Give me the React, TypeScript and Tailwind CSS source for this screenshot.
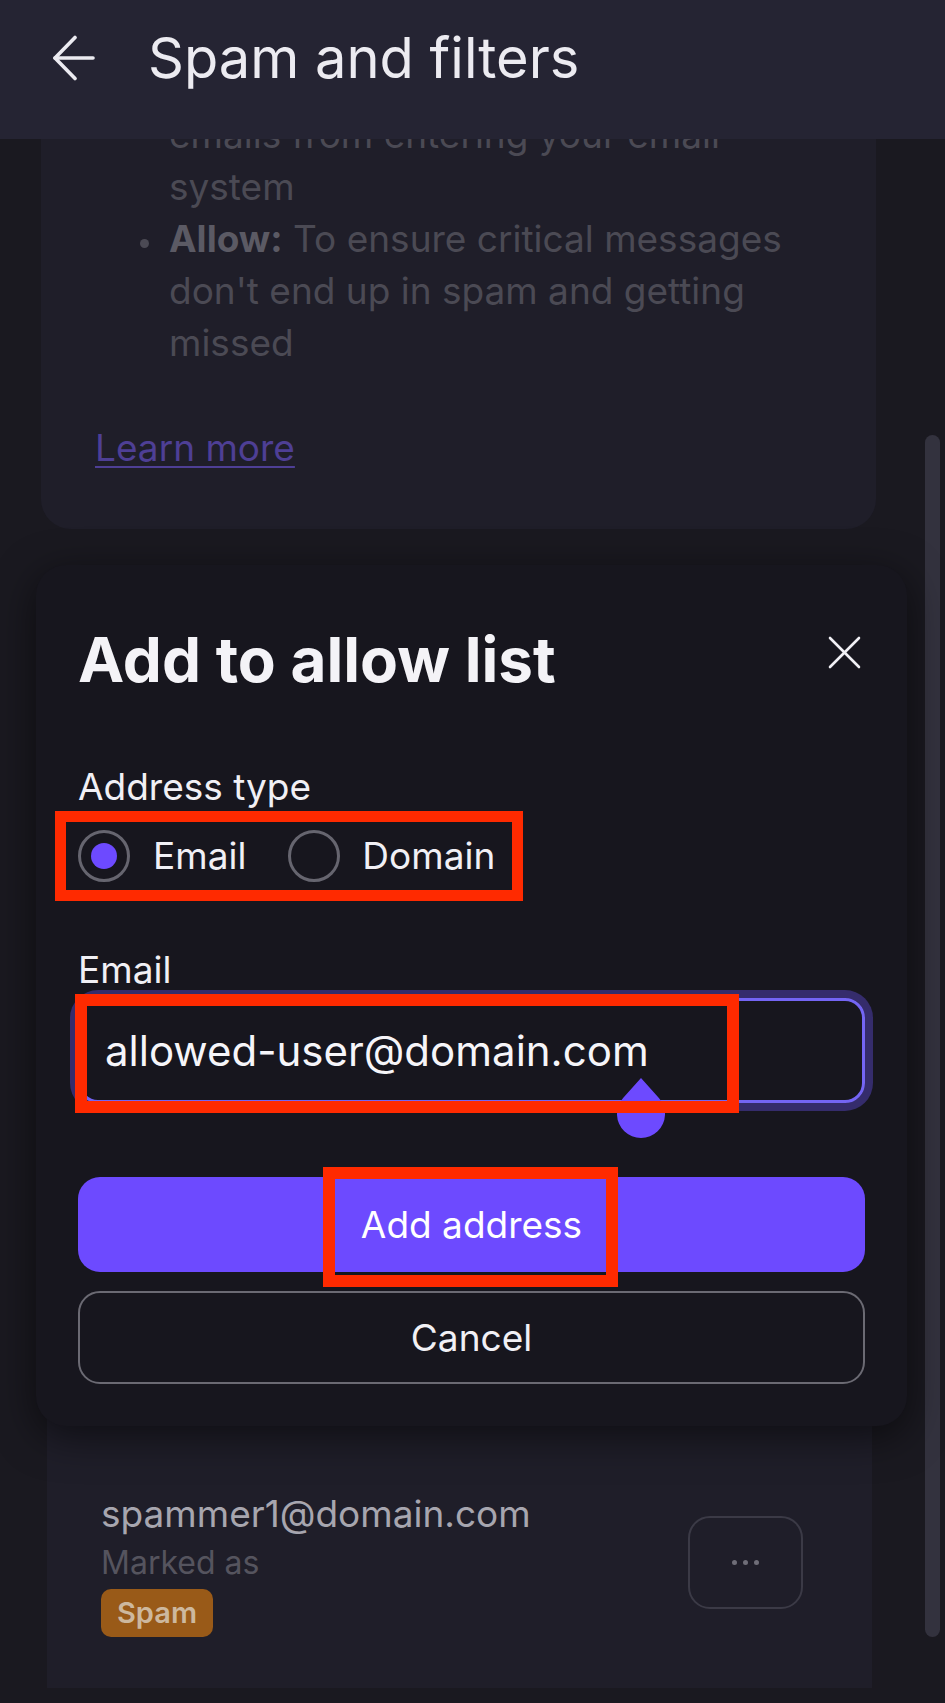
import React from "react";

function BackArrow() {
  return (
    <svg width="43" height="46" viewBox="0 0 43 46" fill="none" stroke="#ecebf1" strokeWidth="3.6" strokeLinecap="round" strokeLinejoin="round">
      <path d="M41 23H3" />
      <path d="M23 2.5L3 23l20 20.5" />
    </svg>
  );
}

function CloseIcon() {
  return (
    <svg width="33" height="33" viewBox="0 0 33 33" fill="none" stroke="#f1f0f5" strokeWidth="2.6" strokeLinecap="round">
      <path d="M2 2l29 29" />
      <path d="M31 2L2 31" />
    </svg>
  );
}

function Drop() {
  return (
    <svg width="48" height="60" viewBox="0 0 48 60">
      <path d="M24 0L41.9 20A24 24 0 1 1 6.1 20Z" fill="#6d4aff" />
    </svg>
  );
}

export default function App() {
  return (
    <div className="relative w-[945px] h-[1703px] overflow-hidden bg-[#1a1920] font-['Inter',sans-serif]">
      {/* Top bar */}
      <header className="relative z-10 h-[139px] bg-[#252433] pl-[52px] pt-[24px]">
        <div className="flex h-[68px] items-center gap-[53px]">
          <BackArrow />
          <h1 className="text-[56px] leading-[68px] text-[#ecebf1]">Spam and filters</h1>
        </div>
      </header>

      <main className="h-[1564px] overflow-hidden">
        {/* Info card (partially scrolled under header) */}
        <section className="-mt-[84px] ml-[41px] w-[835px] rounded-[30px] bg-[#1f1e29] pl-[54px] pt-[54px] pb-[55px] text-[37px] leading-[52px] text-[#4b4a54]">
          <div className="pl-[74px] whitespace-nowrap">
            emails from entering your email
            <br />
            system
          </div>
          <ul className="flex flex-col">
            <li className="flex items-start">
              <span className="flex w-[74px] shrink-0 justify-end pr-[20px] pt-[26px]">
                <span className="size-[9px] rounded-full bg-[#4b4a54]" />
              </span>
              <span className="whitespace-nowrap">
                <b className="font-bold text-[#5b5a64]">Allow:</b> To ensure critical messages
                <br />
                don't end up in spam and getting
                <br />
                missed
              </span>
            </li>
          </ul>
          <a className="mt-[53px] block w-fit text-[#4e3f95] underline decoration-[2px] underline-offset-[5px]">Learn more</a>
        </section>

        {/* Address list row (mostly hidden under the dialog) */}
        <section className="mt-[873px] ml-[47px] w-[825px] bg-[#1f1e29] pl-[54px] pr-[69px] pt-[86px] pb-[51px]">
          <div className="flex items-center justify-between">
            <div className="flex flex-col items-start">
              <span className="text-[37px] leading-[52px] text-[#a7a6af]">spammer1@domain.com</span>
              <span className="mt-[1px] text-[32px] leading-[44px] text-[#55545e]">Marked as</span>
              <span className="mt-[4px] h-[48px] rounded-[10px] bg-[#995a18] px-[16px] text-[29px] font-semibold leading-[48px] text-[#cdb89e]">Spam</span>
            </div>
            <button className="flex h-[93px] w-[115px] items-center justify-center gap-[6px] rounded-[22px] border-2 border-[#3b3a46]">
              <span className="size-[5px] rounded-full bg-[#6f6e78]" />
              <span className="size-[5px] rounded-full bg-[#6f6e78]" />
              <span className="size-[5px] rounded-full bg-[#6f6e78]" />
            </button>
          </div>
        </section>
      </main>

      {/* Scrollbar */}
      <div className="absolute left-[925px] top-[435px] h-[1202px] w-[15px] rounded-full bg-[#33323e]" />

      {/* Dialog */}
      <div className="absolute left-[36px] top-[565px] z-20 w-[871px] rounded-[30px] bg-[#17161e] px-[42px] pt-[57px] pb-[42px] shadow-[0_10px_40px_rgba(0,0,0,0.55)]">
        <div className="flex items-start justify-between">
          <h2 className="text-[62px] font-bold leading-[75px] text-[#f4f3f7]">Add to allow list</h2>
          <span className="mt-[14px] mr-[4px]">
            <CloseIcon />
          </span>
        </div>

        <p className="mt-[64px] text-[37px] leading-[52px] text-[#f1f0f5]">Address type</p>

        <div className="-mt-[2px] -ml-[23px] flex w-fit items-center border-[11px] border-[#ff2a00] pl-[12px] pr-[17px] py-[8px]">
          <span className="flex size-[52px] items-center justify-center rounded-full border-[3px] border-[#66656f]">
            <span className="size-[26px] rounded-full bg-[#6d4aff]" />
          </span>
          <span className="ml-[23px] text-[37px] leading-[52px] text-[#f1f0f5]">Email</span>
          <span className="ml-[42px] size-[52px] rounded-full border-[3px] border-[#66656f]" />
          <span className="ml-[22px] text-[37px] leading-[52px] text-[#f1f0f5]">Domain</span>
        </div>

        <p className="mt-[43px] text-[37px] leading-[52px] text-[#f1f0f5]">Email</p>

        <div className="relative mt-[2px]">
          <div className="flex h-[105px] items-center rounded-[20px] border-[3px] border-[#7465f4] pl-[24px] text-[42px] text-[#f6f5f9] shadow-[0_0_0_8px_#352c6c]">
            allowed-user@domain.com
          </div>
          <div className="absolute left-[539px] top-[80px]">
            <Drop />
          </div>
          <div className="absolute -left-[3px] -top-[4px] h-[119px] w-[664px] border-[12px] border-[#ff2a00]" />
        </div>

        <div className="relative mt-[74px]">
          <button className="flex h-[95px] w-full items-center justify-center rounded-[22px] bg-[#6d4aff] text-[37px] text-white">
            Add address
          </button>
          <div className="absolute left-[245px] -top-[10px] h-[120px] w-[295px] border-[12px] border-[#ff2a00]" />
        </div>

        <button className="mt-[19px] flex h-[93px] w-full items-center justify-center rounded-[22px] border-2 border-[#6b6a73] text-[37px] text-[#f1f0f5]">
          Cancel
        </button>
      </div>
    </div>
  );
}
